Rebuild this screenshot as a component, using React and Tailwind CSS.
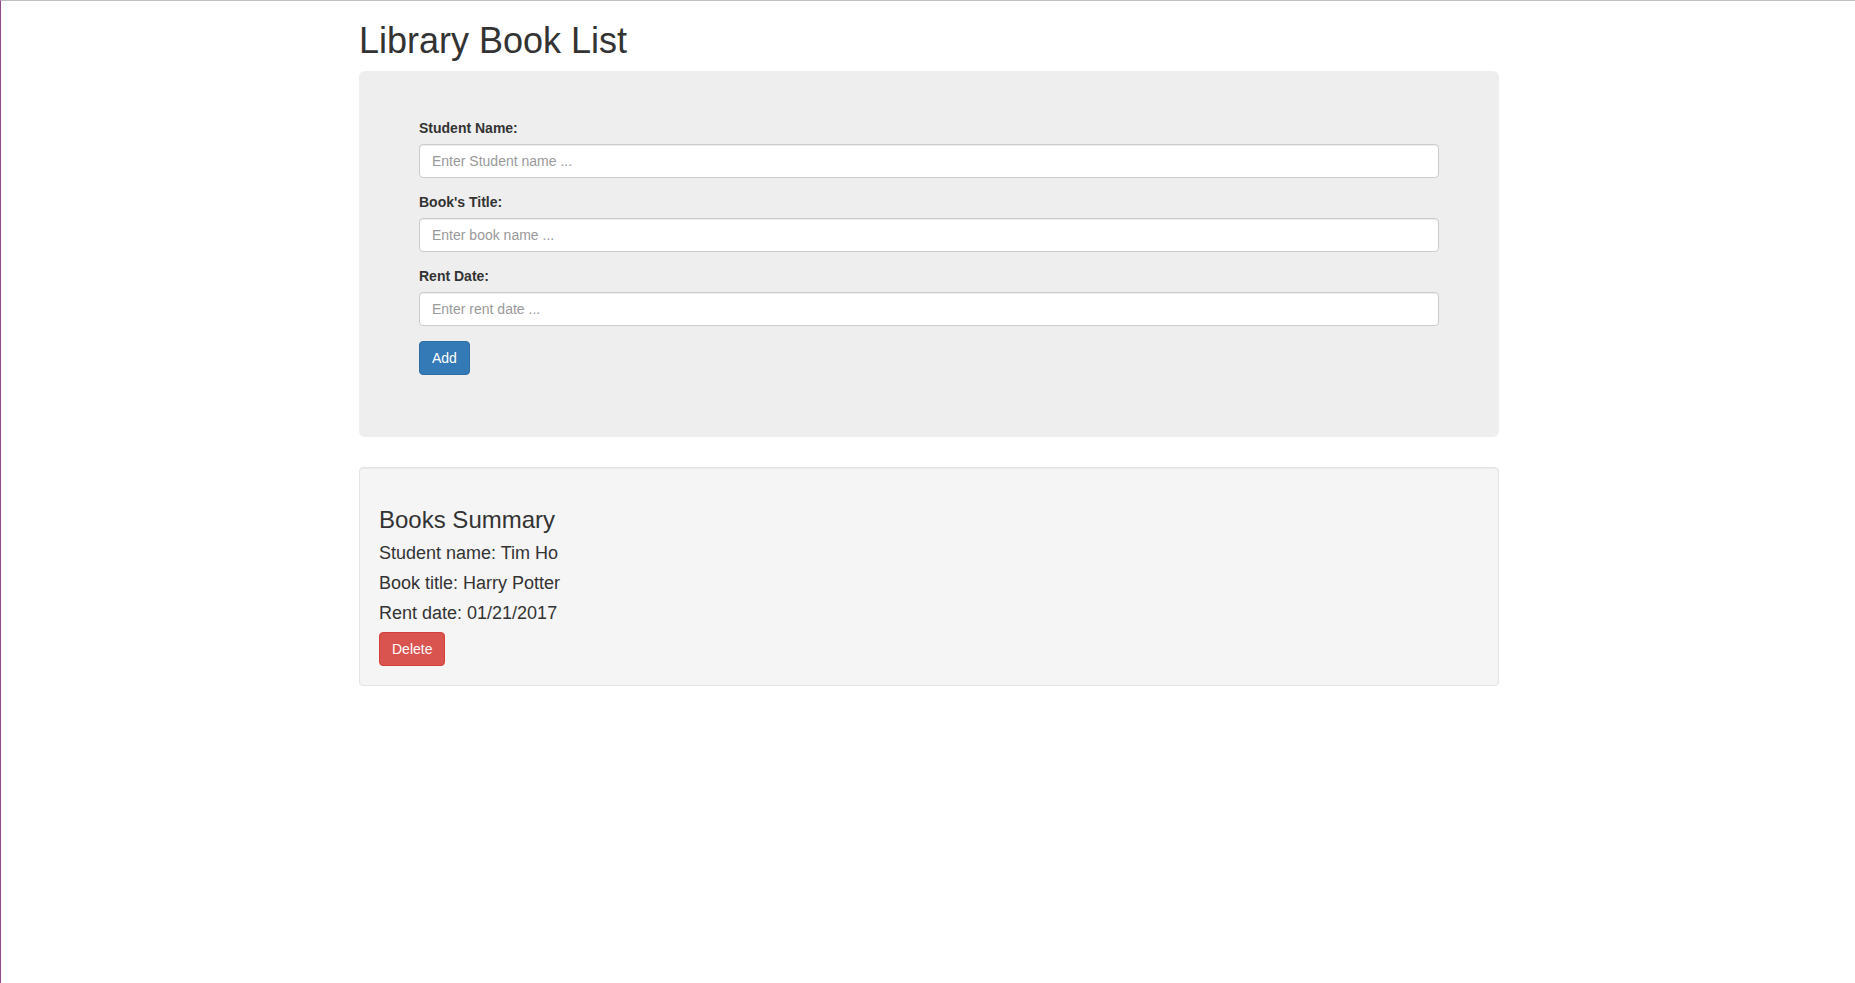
export default function App() {
  const inputCls =
    "block h-[34px] w-full rounded-[4px] border border-[#cccccc] bg-white px-[12px] py-[6px] text-[14px] text-[#555] shadow-[inset_0_1px_1px_rgba(0,0,0,0.075)] placeholder:text-[#999] outline-none";
  const labelCls = "mb-[6px] block font-bold leading-[19px]";
  return (
    <div
      className="min-h-[983px] bg-white border-t border-l border-t-[#bdbdbd] border-l-[#8e4a8e] pl-[2px] text-[14px] leading-[1.42857] text-[#333]"
      style={{ fontFamily: '"Liberation Sans", Arial, Helvetica, sans-serif' }}
    >
      <div className="mx-auto w-[1170px] px-[15px]">
        <h1 className="mt-[20px] mb-[10px] text-[36px] leading-[1.1] font-medium">Library Book List</h1>

        <div className="mb-[30px] rounded-[6px] bg-[#eeeeee] px-[60px] pt-[48px] pb-[47px]">
          <form onSubmit={(e) => e.preventDefault()}>
            <div className="mb-[15px]">
              <label className={labelCls}>Student Name:</label>
              <input type="text" placeholder="Enter Student name ..." className={inputCls} />
            </div>
            <div className="mb-[15px]">
              <label className={labelCls}>Book's Title:</label>
              <input type="text" placeholder="Enter book name ..." className={inputCls} />
            </div>
            <div className="mb-[15px]">
              <label className={labelCls}>Rent Date:</label>
              <input type="text" placeholder="Enter rent date ..." className={inputCls} />
            </div>
            <div className="mb-[15px]">
              <button
                type="submit"
                className="h-[34px] rounded-[4px] border border-[#2e6da4] bg-[#337ab7] px-[12px] text-[14px] leading-[20px] text-white"
              >
                Add
              </button>
            </div>
          </form>
        </div>

        <div className="mb-[20px] rounded-[4px] border border-[#e3e3e3] bg-[#f5f5f5] p-[19px] shadow-[inset_0_1px_1px_rgba(0,0,0,0.05)]">
          <h3 className="mt-[20px] mb-[11px] text-[24px] leading-[1.1] font-medium">Books Summary</h3>
          <h4 className="my-[10px] text-[18px] leading-[1.1] font-medium">Student name: Tim Ho</h4>
          <h4 className="my-[10px] text-[18px] leading-[1.1] font-medium">Book title: Harry Potter</h4>
          <h4 className="mt-[10px] mb-[9px] text-[18px] leading-[1.1] font-medium">Rent date: 01/21/2017</h4>
          <button
            type="button"
            className="h-[34px] rounded-[4px] border border-[#d43f3a] bg-[#d9534f] px-[12px] text-[14px] leading-[20px] text-white"
          >
            Delete
          </button>
        </div>
      </div>
    </div>
  );
}
